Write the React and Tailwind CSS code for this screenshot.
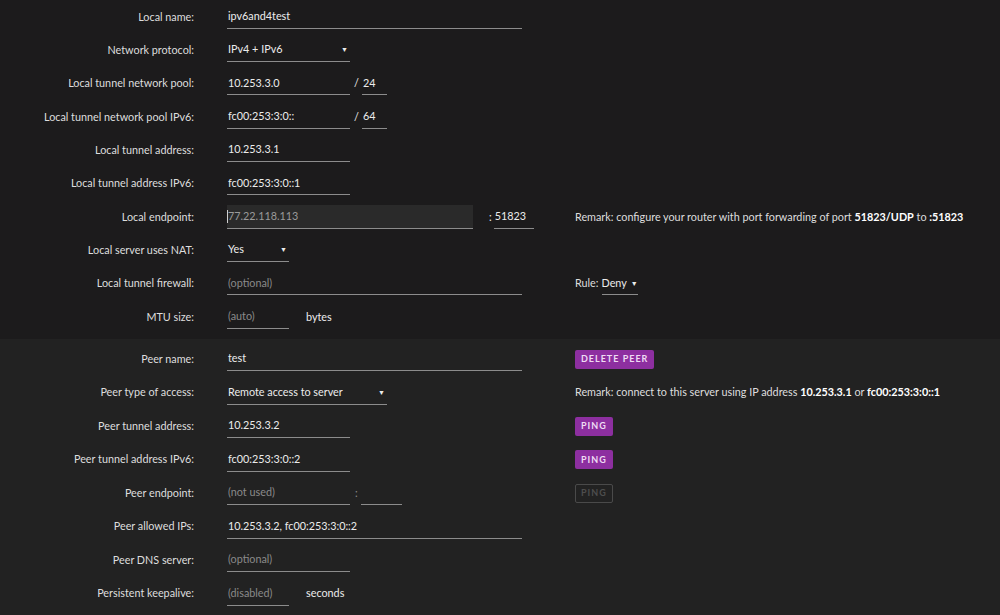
import React from 'react'

const font = { fontFamily: 'Lato, "Liberation Sans", sans-serif' }

function Row({ label, children, right, h = 'h-[33.33px]' }) {
  return (
    <div className={`flex items-center ${h}`}>
      <div className="w-[194px] text-right text-[10.8px] text-[#dedede]">{label}</div>
      <div className="ml-[33px] w-[348px] flex items-center">{children}</div>
      <div className="flex items-center text-[10.8px] text-[#dedede]">{right}</div>
    </div>
  )
}

function Field({ w, value, placeholder }) {
  return (
    <div className={`${w} h-6 border-b border-[#8c8c8c] flex items-center px-[1px] text-[10.8px]`}>
      {value ? <span className="text-[#ececec]">{value}</span> : <span className="text-[#8a8a8a]">{placeholder}</span>}
    </div>
  )
}

function Select({ w, value }) {
  return (
    <div className={`${w} h-6 border-b border-[#8c8c8c] flex items-center justify-between px-[1px] text-[10.8px] text-[#ececec]`}>
      <span>{value}</span>
      <span className="text-[7px] pr-[1px]">▼</span>
    </div>
  )
}

function Btn({ children, disabled }) {
  return disabled ? (
    <div className="h-[19px] px-[5px] flex items-center rounded-[2px] border border-[#4a4a4a] text-[#4e4e4e] text-[9px] font-bold tracking-[1px]">{children}</div>
  ) : (
    <div className="h-[19px] px-[6px] flex items-center rounded-[2px] bg-[#8d2fa0] text-[#efdcf4] text-[9px] font-bold tracking-[1px]">{children}</div>
  )
}

export default function App() {
  return (
    <div className="w-[1000px] h-[615px] overflow-hidden bg-[#222222]" style={font}>
      <div className="bg-[#1c1b1c] pb-[6px]">
        <Row label="Local name:"><Field w="w-[295px]" value="ipv6and4test" /></Row>
        <Row label="Network protocol:"><Select w="w-[123px]" value="IPv4 + IPv6" /></Row>
        <Row label="Local tunnel network pool:">
          <Field w="w-[123px]" value="10.253.3.0" />
          <span className="ml-[4px] text-[10.8px] text-[#ececec]">/</span>
          <div className="ml-[3px]"><Field w="w-[25px]" value="24" /></div>
        </Row>
        <Row label="Local tunnel network pool IPv6:">
          <Field w="w-[123px]" value="fc00:253:3:0::" />
          <span className="ml-[4px] text-[10.8px] text-[#ececec]">/</span>
          <div className="ml-[3px]"><Field w="w-[25px]" value="64" /></div>
        </Row>
        <Row label="Local tunnel address:"><Field w="w-[123px]" value="10.253.3.1" /></Row>
        <Row label="Local tunnel address IPv6:"><Field w="w-[123px]" value="fc00:253:3:0::1" /></Row>
        <Row
          label="Local endpoint:"
          right={
            <span>
              Remark: configure your router with port forwarding of port <b className="text-white">51823/UDP</b> to <b className="text-white">:51823</b>
            </span>
          }
        >
          <div className="w-[246px] h-6 bg-[#2a2a2a] border-b border-[#8c8c8c] flex items-center text-[10.8px] text-[#9a9a9a]">
            <span className="w-px h-[13px] bg-[#cfcfcf]" />
            <span>77.22.118.113</span>
          </div>
          <span className="ml-[16px] text-[10.8px] text-[#ececec]">:</span>
          <div className="ml-[2px]"><Field w="w-[40px]" value="51823" /></div>
        </Row>
        <Row label="Local server uses NAT:"><Select w="w-[62px]" value="Yes" /></Row>
        <Row
          label="Local tunnel firewall:"
          right={
            <div className="flex items-center">
              <span>Rule:</span>
              <div className="ml-[3px] h-6 border-b border-[#8c8c8c] flex items-center gap-[4px] text-[#ececec]">
                <span>Deny</span>
                <span className="text-[7px]">▼</span>
              </div>
            </div>
          }
        >
          <Field w="w-[295px]" placeholder="(optional)" />
        </Row>
        <Row label="MTU size:">
          <Field w="w-[62px]" placeholder="(auto)" />
          <span className="ml-[17px] text-[10.8px] text-[#ececec]">bytes</span>
        </Row>
      </div>
      <div className="pt-[3px]">
        <Row h="h-[33.5px]" label="Peer name:" right={<Btn>DELETE PEER</Btn>}><Field w="w-[295px]" value="test" /></Row>
        <Row
          h="h-[33.5px]"
          label="Peer type of access:"
          right={
            <span>
              Remark: connect to this server using IP address <b className="text-white">10.253.3.1</b> or <b className="text-white">fc00:253:3:0::1</b>
            </span>
          }
        >
          <Select w="w-[160px]" value="Remote access to server" />
        </Row>
        <Row h="h-[33.5px]" label="Peer tunnel address:" right={<Btn>PING</Btn>}><Field w="w-[123px]" value="10.253.3.2" /></Row>
        <Row h="h-[33.5px]" label="Peer tunnel address IPv6:" right={<Btn>PING</Btn>}><Field w="w-[123px]" value="fc00:253:3:0::2" /></Row>
        <Row h="h-[33.5px]" label="Peer endpoint:" right={<Btn disabled>PING</Btn>}>
          <Field w="w-[123px]" placeholder="(not used)" />
          <span className="ml-[5px] text-[10.8px] text-[#8a8a8a]">:</span>
          <div className="ml-[3px]"><Field w="w-[41px]" /></div>
        </Row>
        <Row h="h-[33.5px]" label="Peer allowed IPs:"><Field w="w-[295px]" value="10.253.3.2, fc00:253:3:0::2" /></Row>
        <Row h="h-[33.5px]" label="Peer DNS server:"><Field w="w-[123px]" placeholder="(optional)" /></Row>
        <Row h="h-[33.5px]" label="Persistent keepalive:">
          <Field w="w-[62px]" placeholder="(disabled)" />
          <span className="ml-[17px] text-[10.8px] text-[#ececec]">seconds</span>
        </Row>
      </div>
    </div>
  )
}
